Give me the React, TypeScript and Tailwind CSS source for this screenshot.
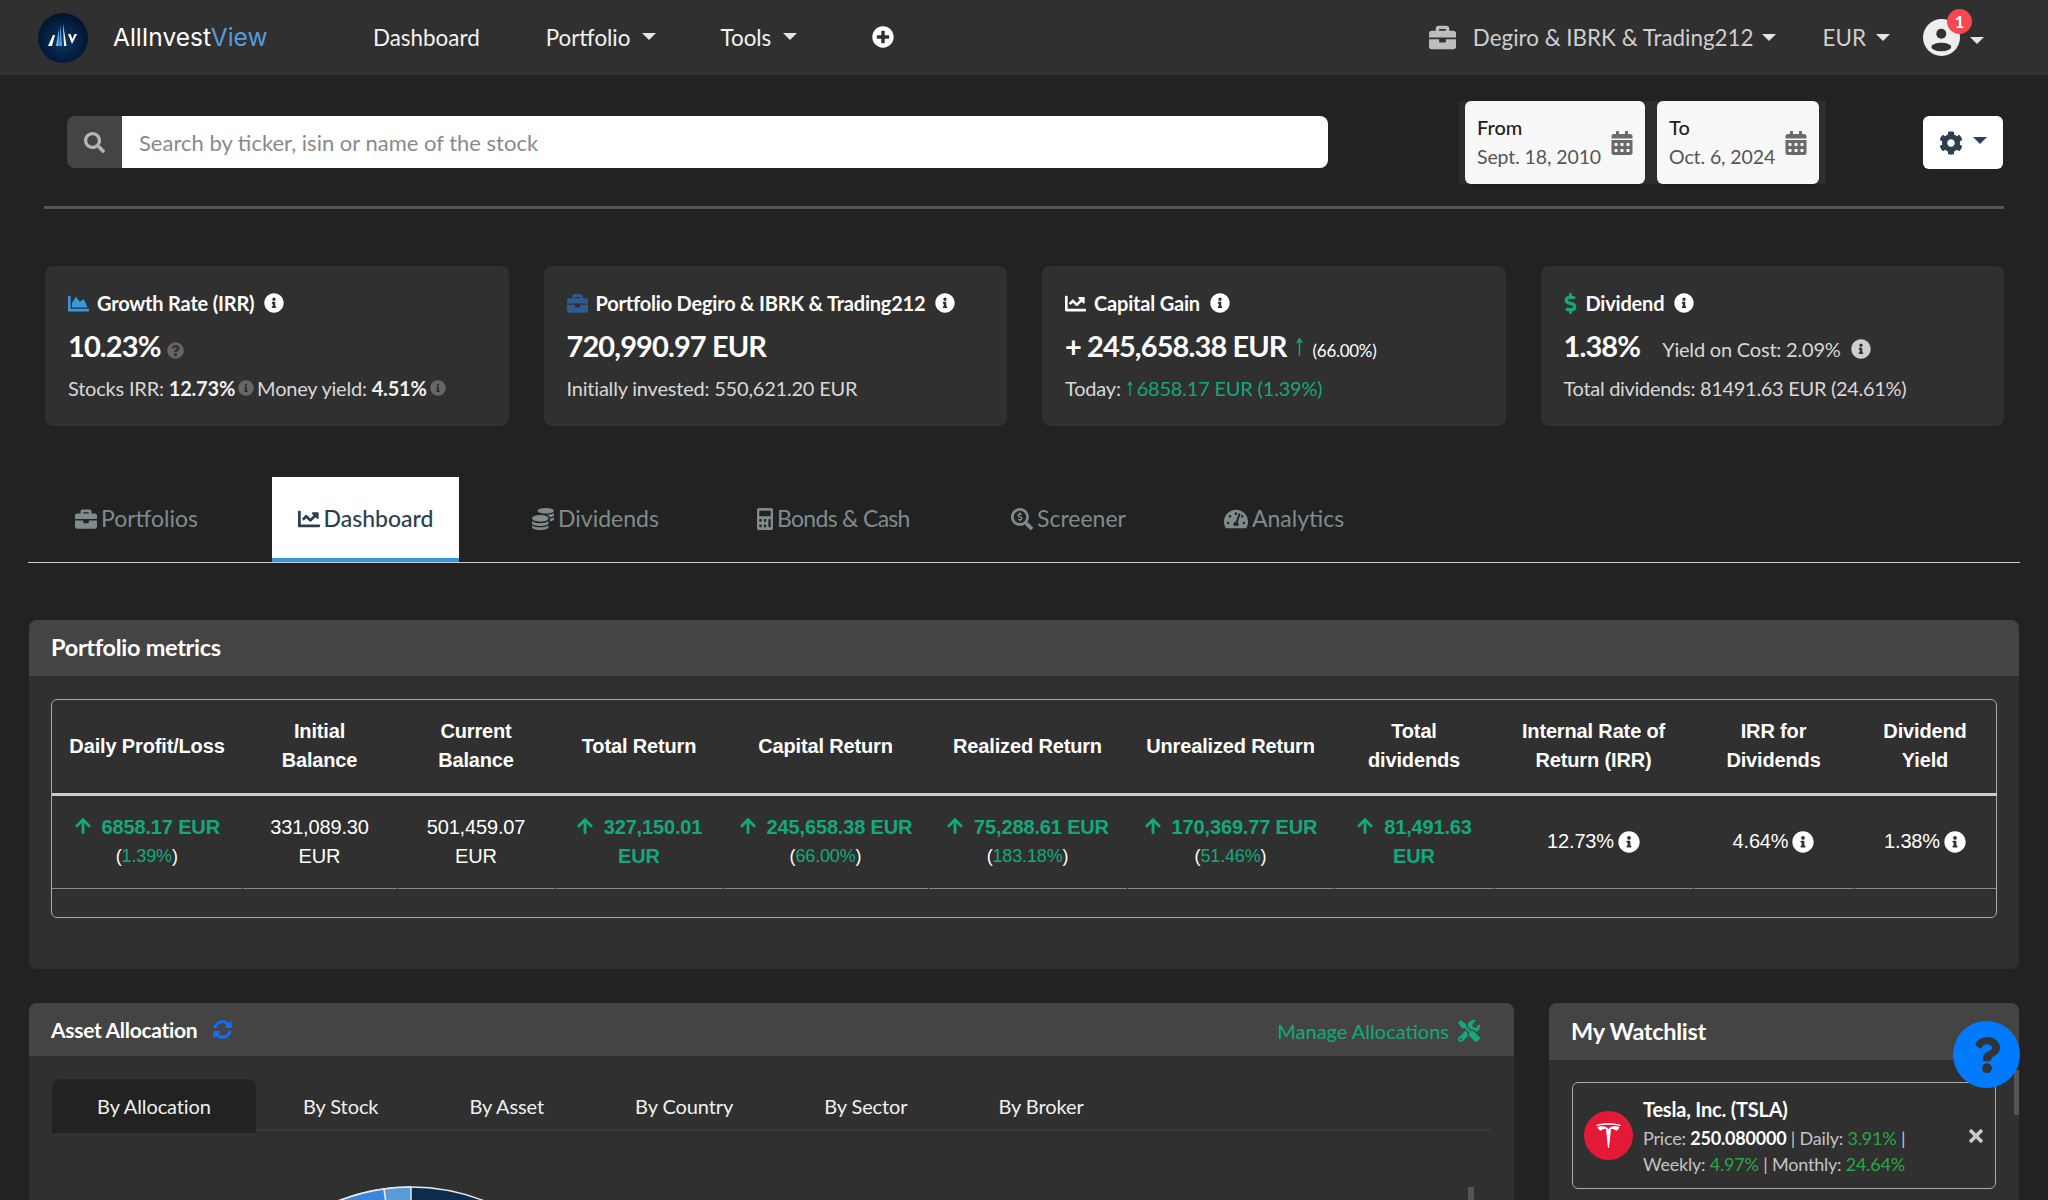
import {
  FaArrowUp,
  FaBriefcase,
  FaCalculator,
  FaCalendarAlt,
  FaChartArea,
  FaChartLine,
  FaCog,
  FaDollarSign,
  FaInfoCircle,
  FaPlusCircle,
  FaQuestion,
  FaQuestionCircle,
  FaSearch,
  FaSearchDollar,
  FaSyncAlt,
  FaTachometerAlt,
  FaTimes,
  FaTools,
  FaCoins,
} from "react-icons/fa";
import type { ReactNode } from "react";

const Caret = ({ className = "border-t-[#e5e5e5]" }: { className?: string }) => (
  <span className={`block w-0 h-0 border-x-[7px] border-x-transparent border-t-[7px] ${className}`} />
);

const ThinUp = ({ className }: { className: string }) => (
  <svg viewBox="0 0 10 20" fill="none" stroke="currentColor" strokeWidth="1.6" className={className}>
    <path d="M5 20 L5 2 M2 6 L5 1.500 L8 6" />
  </svg>
);

const Logo = () => (
  <svg width="52" height="50" viewBox="0 0 52 50" className="shrink-0">
    <defs>
      <radialGradient id="lg" cx="50%" cy="55%" r="55%">
        <stop offset="0%" stopColor="#0c3566" />
        <stop offset="100%" stopColor="#00142e" />
      </radialGradient>
    </defs>
    <circle cx="26" cy="25" r="25" fill="url(#lg)" />
    <path d="M11 33 L16 22 L18 22 L15 33 Z" fill="#ffffff" />
    <path d="M22 33 L23.500 11 L25 33 Z" fill="#4aa3e8" />
    <path d="M19 33 L22 16 L21.500 33 Z" fill="#7cc4f5" />
    <path d="M27 33 L26 11 L29.500 33 Z" fill="#ffffff" />
    <path d="M31 21 L35 31 L40 21 L37.500 21 L35.500 26 L33.500 21 Z" fill="#ffffff" />
  </svg>
);

const UserIcon = () => (
  <svg width="37" height="37" viewBox="0 0 37 37">
    <circle cx="18.500" cy="18.500" r="18.500" fill="#eeeeee" />
    <circle cx="18.300" cy="14.700" r="5" fill="#303030" />
    <ellipse cx="18.300" cy="28" rx="10" ry="4.200" fill="#303030" />
  </svg>
);

const StatCard = ({ icon, title, children, sub }: { icon: ReactNode; title: string; children: ReactNode; sub: ReactNode }) => (
  <div className="bg-[#303030] rounded-lg h-[160px] px-[23px] pt-[23px]">
    <div className="flex items-center h-[28px] text-[20px] font-bold text-white tracking-[-0.2px]">
      {icon}
      <span>{title}</span>
      <FaInfoCircle className="ml-[10px] text-[20px] text-white" />
    </div>
    <div className="flex items-baseline h-[30px] mt-[14px] leading-[30px] text-white">{children}</div>
    <div className="mt-[13px] text-[20px] leading-[28px] text-[#d8d8d8] whitespace-nowrap tracking-[-0.2px]">{sub}</div>
  </div>
);

const Tab = ({ icon, label, active, w, tight }: { icon: ReactNode; label: string; active?: boolean; w: string; tight?: boolean }) => (
  <div
    className={`flex items-center gap-[4px] text-[23px] h-[85px] ${w} ${
      active ? "bg-white text-[#2c3e50] border-b-4 border-[#3498db] font-medium justify-center pt-[2px]" : "text-[#7f8c8d] pb-[2px]"
    }`}
  >
    {icon}
    <span className={tight ? "tracking-[-0.7px]" : ""}>{label}</span>
  </div>
);

const Up = () => <FaArrowUp className="inline-block text-[#12a97d] text-[18px] mr-[10px] -mt-[4px]" />;

const Pos = ({ value, pct }: { value: string; pct?: string }) => (
  <>
    <div className="font-bold text-[#12a97d]">
      <Up />
      {value}
    </div>
    {pct && (
      <div className="text-[18px] text-white">
        (<span className="text-[#12a97d]">{pct}</span>)
      </div>
    )}
  </>
);

const headers = [
  "Daily Profit/Loss",
  "Initial Balance",
  "Current Balance",
  "Total Return",
  "Capital Return",
  "Realized Return",
  "Unrealized Return",
  "Total dividends",
  "Internal Rate of Return (IRR)",
  "IRR for Dividends",
  "Dividend Yield",
];

const colWidths = ["w-[190px]", "w-[155px]", "w-[158px]", "w-[168px]", "w-[205px]", "w-[199px]", "w-[207px]", "w-[160px]", "w-[199px]", "w-[161px]", "w-[142px]"];

const Cell = ({ children }: { children: ReactNode }) => (
  <td className="border-r border-transparent px-[12px] text-center align-middle">{children}</td>
);

const Pct = ({ value }: { value: string }) => (
  <span className="inline-flex items-center gap-[4px]">
    {value}
    <FaInfoCircle className="text-[22px] text-white" />
  </span>
);

export default function App() {
  return (
    <div className="relative h-screen overflow-hidden bg-[#222222] text-white [font-family:Lato,'Liberation_Sans',sans-serif]">
      {/* navbar */}
      <header className="h-[75px] bg-[#303030] flex items-center pl-[37px] pr-[64px]">
        <Logo />
        <span className="ml-[24px] w-[260px] text-[24.5px] [font-family:Inter,sans-serif] tracking-[0px]">
          AllInvest<span className="text-[#5a9bd8]">View</span>
        </span>
        <nav className="flex items-center text-[22.4px] text-[#f2f2f2]">
          <span>Dashboard</span>
          <span className="ml-[66px]">Portfolio</span>
          <span className="ml-[12px] mt-[-1px]"><Caret /></span>
          <span className="ml-[64px]">Tools</span>
          <span className="ml-[12px] mt-[-1px]"><Caret /></span>
          <FaPlusCircle className="ml-[75px] text-[22px] text-white" />
        </nav>
        <div className="ml-auto flex items-center text-[22.4px] text-[#cfcfcf]">
          <FaBriefcase className="text-[27px] text-[#bdbdbd]" />
          <span className="ml-[17px]">Degiro &amp; IBRK &amp; Trading212</span>
          <span className="ml-[8px] mt-[-1px]"><Caret /></span>
          <span className="ml-[47px]">EUR</span>
          <span className="ml-[10px] mt-[-1px]"><Caret /></span>
          <span className="relative ml-[33px] flex items-center">
            <UserIcon />
            <span className="absolute -top-[10px] left-[24px] w-[25px] h-[25px] rounded-full bg-[#f9464f] text-white text-[17px] font-bold flex items-center justify-center">
              1
            </span>
          </span>
          <span className="ml-[10px] mt-[5px]"><Caret /></span>
        </div>
      </header>

      {/* search + dates */}
      <div className="mx-[44px] h-[134px] border-b-[3px] border-[#555555] flex items-start">
        <div className="ml-[23px] mt-[41px] w-[1261px] h-[52px] flex">
          <div className="w-[55px] bg-[#444444] rounded-l-lg flex items-center justify-center">
            <FaSearch className="text-[21px] text-[#b5b5b5]" />
          </div>
          <div className="flex-1 bg-white rounded-r-lg flex items-center pl-[17px] text-[22px] text-[#8a8a8a]">
            Search by ticker, isin or name of the stock
          </div>
        </div>
        <div className="ml-[131px] mt-[26px] h-[83px] bg-[#2e2e2e] flex gap-[12px] pl-[6px] pr-[7px]">
          <DateBox label="From" value="Sept. 18, 2010" w="w-[180px]" />
          <DateBox label="To" value="Oct. 6, 2024" w="w-[162px]" />
        </div>
        <div className="ml-[97px] mt-[41px] w-[80px] h-[53px] bg-white rounded-md flex items-center justify-center gap-[10px]">
          <FaCog className="text-[24px] text-[#2c3e50]" />
          <Caret className="border-t-[#2c3e50] -mt-[4px]" />
        </div>
      </div>

      {/* stat cards */}
      <div className="ml-[45px] mr-[44px] mt-[57px] grid grid-cols-4 gap-x-[35px]">
        <StatCard
          icon={<FaChartArea className="text-[21px] text-[#3498db] mr-[8px]" />}
          title="Growth Rate (IRR)"
          sub={
            <span className="inline-flex items-center">
              Stocks IRR:&nbsp;<b className="text-[#f0f0f0]">12.73%</b>
              <FaInfoCircle className="text-[16px] text-[#666] mx-[3px]" />
              Money yield:&nbsp;<b className="text-[#f0f0f0]">4.51%</b>
              <FaInfoCircle className="text-[16px] text-[#666] ml-[3px]" />
            </span>
          }
        >
          <span className="text-[29px] font-bold tracking-[-0.9px]">10.23%</span>
          <FaQuestionCircle className="ml-[6px] text-[17px] text-[#666] self-end mb-[2px]" />
        </StatCard>
        <StatCard
          icon={<FaBriefcase className="text-[21px] text-[#2e5c8f] mr-[8px]" />}
          title="Portfolio Degiro & IBRK & Trading212"
          sub="Initially invested: 550,621.20 EUR"
        >
          <span className="text-[29px] font-bold tracking-[-0.9px]">720,990.97 EUR</span>
        </StatCard>
        <StatCard
          icon={<FaChartLine className="text-[21px] text-white mr-[8px]" />}
          title="Capital Gain"
          sub={
            <span className="inline-flex items-center">
              Today:&nbsp;<ThinUp className="w-[8px] h-[15px] text-[#12a97d] mr-[3px]" />
              <span className="text-[#12a97d]">6858.17 EUR (1.39%)</span>
            </span>
          }
        >
          <span className="text-[29px] font-bold tracking-[-0.9px]">+ 245,658.38 EUR</span>
          <ThinUp className="ml-[8px] w-[9px] h-[21px] text-[#12a97d] self-center" />
          <span className="ml-[9px] text-[17px] tracking-[-0.3px]">(66.00%)</span>
        </StatCard>
        <StatCard
          icon={<FaDollarSign className="text-[21px] text-[#12a97d] -ml-[4px] mr-[5px]" />}
          title="Dividend"
          sub={<span className="tracking-[-0.3px]">Total dividends: 81491.63 EUR (24.61%)</span>}
        >
          <span className="text-[29px] font-bold tracking-[-0.9px]">1.38%</span>
          <span className="ml-[22px] text-[20px] text-[#d8d8d8] tracking-[-0.2px]">Yield on Cost: 2.09%</span>
          <FaInfoCircle className="ml-[10px] text-[20px] text-[#cfcfcf] self-end mb-[2px]" />
        </StatCard>
      </div>

      {/* tabs */}
      <div className="mx-[28px] mt-[51px] border-b border-[#cccccc] flex h-[86px]">
        <Tab w="w-[244px] pl-[47px]" icon={<FaBriefcase className="text-[22px]" />} label="Portfolios" />
        <Tab w="w-[187px]" active icon={<FaChartLine className="text-[22px]" />} label="Dashboard" />
        <Tab w="w-[248px] pl-[73px]" icon={<FaCoins className="text-[22px]" />} label="Dividends" />
        <Tab w="w-[254px] pl-[50px]" tight icon={<FaCalculator preserveAspectRatio="none" className="w-[16px] h-[22px]" />} label="Bonds &amp; Cash" />
        <Tab w="w-[213px] pl-[50px]" icon={<FaSearchDollar className="text-[22px]" />} label="Screener" />
        <Tab w="w-[250px] pl-[50px]" icon={<FaTachometerAlt className="text-[24px]" />} label="Analytics" />
      </div>

      {/* portfolio metrics */}
      <section className="mx-[29px] mt-[57px] rounded-lg overflow-hidden bg-[#303030] h-[349px]">
        <div className="h-[56px] bg-[#444444] flex items-center px-[22px] text-[23.5px] font-bold tracking-[-0.3px]">Portfolio metrics</div>
        <div className="mx-[22px] mt-[23px] border border-[#aaaaaa] rounded-md [font-family:'Liberation_Sans',Arial,sans-serif] text-[20px] leading-[29px] tracking-[-0.15px]">
          <table className="w-full table-fixed border-collapse">
            <colgroup>
              {colWidths.map((c, i) => (
                <col key={i} className={c} />
              ))}
            </colgroup>
            <thead>
              <tr className="h-[94px] border-b-[3px] border-[#cccccc]">
                {headers.map((h) => (
                  <th key={h} className="font-bold text-center px-[12px] align-middle">{h}</th>
                ))}
              </tr>
            </thead>
            <tbody>
              <tr className="h-[94px] border-b border-[#888888]">
                <Cell><Pos value="6858.17 EUR" pct="1.39%" /></Cell>
                <Cell>331,089.30 EUR</Cell>
                <Cell>501,459.07 EUR</Cell>
                <Cell><Pos value="327,150.01 EUR" /></Cell>
                <Cell><Pos value="245,658.38 EUR" pct="66.00%" /></Cell>
                <Cell><Pos value="75,288.61 EUR" pct="183.18%" /></Cell>
                <Cell><Pos value="170,369.77 EUR" pct="51.46%" /></Cell>
                <Cell><Pos value="81,491.63 EUR" /></Cell>
                <Cell><Pct value="12.73%" /></Cell>
                <Cell><Pct value="4.64%" /></Cell>
                <Cell><Pct value="1.38%" /></Cell>
              </tr>
              <tr className="h-[29px]"><td colSpan={11} /></tr>
            </tbody>
          </table>
        </div>
      </section>

      {/* bottom row */}
      <div className="mx-[29px] mt-[34px] flex gap-[35px]">
        <section className="w-[1485px] shrink-0 rounded-t-lg bg-[#303030] h-[400px]">
          <div className="h-[53px] bg-[#444444] rounded-t-lg flex items-center pl-[22px] pr-[34px]">
            <span className="text-[21px] font-bold tracking-[-0.3px]">Asset Allocation</span>
            <FaSyncAlt className="ml-[16px] text-[19px] text-[#0d6efd]" />
            <span className="ml-auto flex items-center gap-[9px] text-[20px] text-[#12a97d] mt-[3px]">
              Manage Allocations <FaTools className="text-[22px]" />
            </span>
          </div>
          <div className="mx-[23px] mt-[23px] flex h-[52px] border-b-2 border-[#3a3a3a] text-[20px] tracking-[-0.1px] text-[#f0f0f0]">
            <div className="w-[204px] h-[54px] bg-[#222222] rounded-t-lg flex items-center justify-center">By Allocation</div>
            <div className="ml-[47px] h-[54px] flex items-center">By Stock</div>
            <div className="ml-[91px] h-[54px] flex items-center">By Asset</div>
            <div className="ml-[91px] h-[54px] flex items-center">By Country</div>
            <div className="ml-[91px] h-[54px] flex items-center">By Sector</div>
            <div className="ml-[91px] h-[54px] flex items-center">By Broker</div>
          </div>
          <svg width="402" height="40" viewBox="-201 -201 402 40" className="ml-[181px] mt-[55px]">
            <circle cx="0" cy="0" r="200" fill="#0d2b4a" stroke="#e8e8e8" strokeWidth="1.5" />
            <path d="M0 0 L0 -200 A200 200 0 0 0 -27 -198 Z" fill="#5b9bd5" stroke="#e8e8e8" strokeWidth="1.5" />
            <path d="M0 0 L-27 -198 A200 200 0 0 0 -90 -178 Z" fill="#3a86dc" stroke="#e8e8e8" strokeWidth="1.5" />
          </svg>
        </section>
        <section className="flex-1 rounded-t-lg bg-[#303030] h-[400px]">
          <div className="h-[57px] bg-[#444444] rounded-t-lg flex items-center px-[22px] text-[23.5px] font-bold tracking-[-0.3px]">My Watchlist</div>
          <div className="mx-[23px] mt-[22px] h-[107px] border border-[#aaaaaa] rounded-md flex items-center pl-[11px] pr-[9px]">
            <div className="w-[49px] h-[49px] rounded-full bg-[#e31937] flex items-center justify-center shrink-0">
              <svg width="25" height="25" viewBox="0 0 25 25" fill="#ffffff">
                <path d="M0 2 C6 -0.500 19 -0.500 25 2 L24.500 3 C19 1.200 6 1.200 0.500 3 Z" />
                <path d="M1.500 4 C4 3 9 3 11 4.500 L12.500 6 L14 4.500 C16 3 21 3 23.500 4 C23 6 21.500 7.500 20 7.800 C19.500 6.500 18 6 15 6 L13 25 L12 25 L10 6 C7 6 5.500 6.500 5 7.800 C3.500 7.500 2 6 1.500 4 Z" />
              </svg>
            </div>
            <div className="ml-[10px] mt-[1px] flex-1 text-[18px] leading-[26px] text-[#c4c4c4] tracking-[-0.2px]">
              <div className="text-[20px] font-bold text-white mb-[3px]">Tesla, Inc. (TSLA)</div>
              <div>
                Price: <b className="text-white">250.080000</b> | Daily: <span className="text-[#28a745]">3.91%</span> |
              </div>
              <div>
                Weekly: <span className="text-[#28a745]">4.97%</span> | Monthly: <span className="text-[#28a745]">24.64%</span>
              </div>
            </div>
            <FaTimes className="text-[20px] text-[#cccccc] shrink-0" />
          </div>
        </section>
      </div>

      {/* scrollbars + help bubble */}
      <div className="absolute left-[1468px] top-[1187px] w-[6px] h-[13px] bg-[#555555]" />
      <div className="absolute left-[2014px] top-[1070px] w-[5px] h-[45px] bg-[#555555]" />
      <div className="absolute left-[1953px] top-[1021px] w-[67px] h-[67px] rounded-full bg-[#007bff] flex items-center justify-center">
        <FaQuestion className="text-[36px] text-[#333333]" />
      </div>
    </div>
  );
}

function DateBox({ label, value, w }: { label: string; value: string; w: string }) {
  return (
    <div className={`${w} h-[83px] bg-[#f8f8f8] rounded-md flex items-center justify-between pl-[12px] pr-[11px] shadow-sm`}>
      <div className="leading-[30px]">
        <div className="text-[20px] text-[#222222] font-medium -mt-[1px]">{label}</div>
        <div className="text-[19.5px] text-[#555555] tracking-[-0.1px]">{value}</div>
      </div>
      <FaCalendarAlt className="text-[24px] text-[#6a6a6a] shrink-0" />
    </div>
  );
}
